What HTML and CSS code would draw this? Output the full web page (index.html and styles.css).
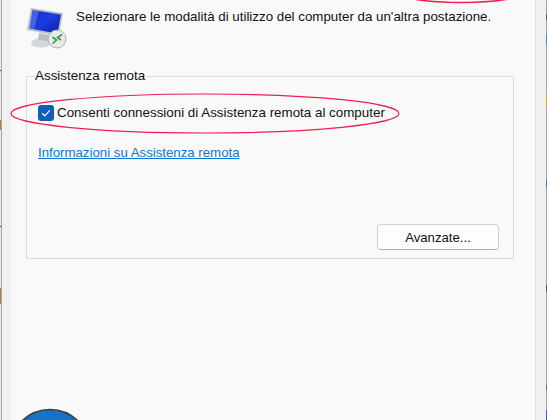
FILE: index.html
```html
<!DOCTYPE html>
<html lang="it">
<head>
    <meta charset="UTF-8">
    <meta name="viewport" content="width=device-width, initial-scale=1.0">
    <title>Assistenza remota</title>
    <link rel="stylesheet" href="styles.css">
</head>
<body>
    <div class="window">
        <div class="dialog">
            <div class="intro">
                <svg class="monitor" width="42" height="50" viewBox="0 0 42 50">
                    <defs>
                        <linearGradient id="screen" x1="0" y1="0" x2="1" y2="1">
                            <stop offset="0" stop-color="#1a2cc0"/>
                            <stop offset="0.5" stop-color="#1b3ce0"/>
                            <stop offset="1" stop-color="#0b1c98"/>
                        </linearGradient>
                    </defs>
                    <ellipse cx="14" cy="43" rx="10" ry="4.5" fill="#d4d8da"/>
                    <path d="M12 33 L22 35 L22 41 L11 40 Z" fill="#b8bec2"/>
                    <path d="M4 8 L36 13 L32 36 L0 30 Z" fill="#b9c2c9"/>
                    <path d="M5.5 10 L34 14.5 L30.5 33.5 L2.5 28.5 Z" fill="url(#screen)"/>
                    <path d="M5.5 10 L12 11 L7 29 L2.5 28.5 Z" fill="#6d8ff5" opacity="0.5"/>
                    <circle cx="30" cy="39" r="9" fill="#e6ebe8" stroke="#a9b0b0"/>
                    <path d="M35 34.5 L30.5 37.5 L34 40" fill="none" stroke="#2f9e3f" stroke-width="1.6"/>
                    <path d="M25.5 37 L29.5 40 L25.5 43.5" fill="none" stroke="#2f9e3f" stroke-width="1.6"/>
                </svg>
                <p class="intro-text">Selezionare le modalità di utilizzo del computer da un'altra postazione.</p>
            </div>

            <fieldset class="group">
                <legend>Assistenza remota</legend>
                <label class="check-row">
                    <span class="checkbox">
                        <svg width="16" height="16" viewBox="0 0 16 16"><path d="M4.2 8.3 L6.8 10.8 L11.8 5.4" fill="none" stroke="#fff" stroke-width="1.2"/></svg>
                    </span>
                    Consenti connessioni di Assistenza remota al computer
                </label>
                <a class="info-link" href="#">Informazioni su Assistenza remota</a>
                <div class="actions">
                    <button class="btn">Avanzate...</button>
                </div>
            </fieldset>
        </div>
    </div>

    <!-- bits of the windows behind, showing at the edges -->
    <div class="edge edge-left"></div>
    <div class="edge edge-right"></div>

    <!-- annotation drawn over the screenshot -->
    <svg class="marks" width="547" height="420" viewBox="0 0 547 420">
        <ellipse cx="205" cy="113.5" rx="194" ry="19.5" fill="none" stroke="#ee1f50" stroke-width="1.2"/>
        <ellipse cx="461" cy="-17.5" rx="85" ry="20" fill="none" stroke="#ee1f50" stroke-width="1.5"/>
        <circle cx="50" cy="449.5" r="40" fill="#1673c4" stroke="#3a3a3a" stroke-width="1.6"/>
    </svg>
</body>
</html>
```
FILE: styles.css
```css
html, body {
    margin: 0;
    height: 100%;
}
body {
    font-family: "Liberation Sans", Arial, sans-serif;
    font-size: 14px;
    color: #111;
    background-color: #f0f0f0;
    overflow: hidden;
}
.window {
    height: 420px;
    box-sizing: border-box;
    padding: 0 10px 0 9px;
    border-left: 1px solid #a8a8a8;
    border-right: 1px solid #a0a0a0;
    margin-left: 1px;
}
.dialog {
    height: 100%;
    box-sizing: border-box;
    background-color: #f9f9f9;
    border-right: 1px solid #e4e4e4;
    padding: 0 21px 0 15px;
}
.intro {
    display: flex;
    height: 56px;
}
.monitor {
    flex: none;
    margin-left: 1px;
}
.intro-text {
    margin: 9px 0 0 7px;
    font-size: 13.34px;
    line-height: 15px;
    white-space: nowrap;
}
.group {
    margin: 12px 0 0 0;
    padding: 0 14px 15px 11px;
    border: 1px solid #dcdcdc;
    height: 191px;
    box-sizing: border-box;
    display: block;
}
.group legend {
    padding: 0 2px 0 0;
    margin-left: -3px;
    font-size: 13.4px;
    line-height: 16px;
}
.check-row {
    display: flex;
    align-items: center;
    gap: 3px;
    margin-top: 21px;
    font-size: 13.38px;
    line-height: 16px;
    white-space: nowrap;
}
.checkbox {
    flex: none;
    width: 16px;
    height: 16px;
    background-color: #0f5fb4;
    border-radius: 3px;
}
.checkbox svg {
    display: block;
}
.info-link {
    display: block;
    margin-top: 24px;
    font-size: 13.24px;
    line-height: 16px;
    color: #0a78d7;
}
.actions {
    display: flex;
    justify-content: flex-end;
    margin-top: 63px;
}
.btn {
    width: 122px;
    height: 26px;
    font-family: inherit;
    font-size: 13.2px;
    color: #111;
    background-color: #fdfdfd;
    border: 1px solid #d0d0d0;
    border-bottom-color: #b4b4b4;
    border-radius: 4px;
}
.edge {
    position: absolute;
    top: 0;
    width: 1px;
    height: 420px;
}
.edge-left {
    left: 0;
    background: linear-gradient(to bottom,
        #e8e8e8 70px, #333 70px, #333 71px, #e8e8e8 71px,
        #e8e8e8 120px, #b5813f 120px, #b5813f 130px, #e8e8e8 130px,
        #e8e8e8 226px, #333 226px, #333 227px, #e8e8e8 227px,
        #e8e8e8 288px, #b5813f 288px, #b5813f 304px, #e8e8e8 304px);
}
.edge-right {
    right: 0;
    background: linear-gradient(to bottom,
        #a0a0a0 14px, #5a5a9a 14px, #5a5a9a 20px, #a0a0a0 20px,
        #a0a0a0 34px, #4a8fa8 34px, #4a8fa8 45px, #a0a0a0 45px,
        #a0a0a0 95px, #c9a040 95px, #c9a040 105px, #a0a0a0 105px,
        #a0a0a0 180px, #4a70a8 180px, #4a70a8 187px, #a0a0a0 187px,
        #a0a0a0 285px, #3a62b0 285px, #3a62b0 292px, #a0a0a0 292px,
        #a0a0a0 385px, #3f7f4f 385px, #3f7f4f 390px, #a0a0a0 390px,
        #a0a0a0 410px, #3a62b0 410px, #3a62b0 420px);
}
.marks {
    position: absolute;
    left: 0;
    top: 0;
    pointer-events: none;
}
```
